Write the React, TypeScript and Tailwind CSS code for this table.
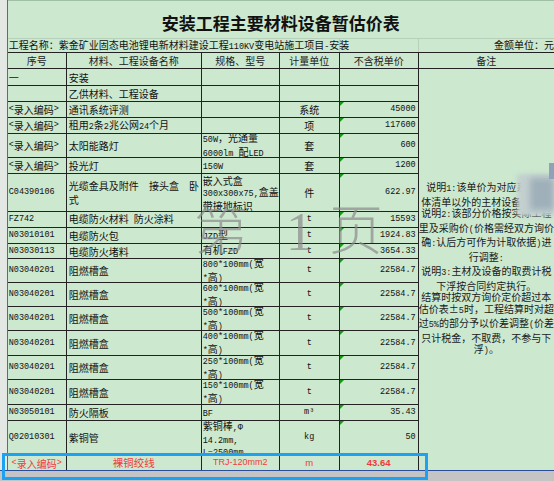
import React from "react";

type Row = {
  code: string;
  name: string[];
  spec: string[];
  unit: string;
  price: string;
  h: string;
};

const rows: Row[] = [
  { code: "一", name: ["安装"], spec: [], unit: "", price: "", h: "h-[17px]" },
  { code: "", name: ["乙供材料、工程设备"], spec: [], unit: "", price: "", h: "h-[16px]" },
  { code: "<录入编码>", name: ["通讯系统评测"], spec: [], unit: "系统", price: "45000", h: "h-[16px]" },
  { code: "<录入编码>", name: ["租用2条2兆公网24个月"], spec: [], unit: "项", price: "117600", h: "h-[16px]" },
  { code: "<录入编码>", name: ["太阳能路灯"], spec: ["50W，光通量", "6000lm 配LED"], unit: "套", price: "600", h: "h-[24px]" },
  { code: "<录入编码>", name: ["投光灯"], spec: ["150W"], unit: "套", price: "1200", h: "h-[16px]" },
  {
    code: "C04390106",
    name: ["光缆金具及附件  接头盒  卧", "式"],
    spec: ["嵌入式盒", "300x300x75,盒盖", "带接地标识"],
    unit: "件",
    price: "622.97",
    h: "h-[38px]",
  },
  { code: "FZ742", name: ["电缆防火材料 防火涂料"], spec: [], unit: "t", price: "15593", h: "h-[16px]" },
  { code: "N03010101", name: ["电缆防火包"], spec: ["JZD型"], unit: "t", price: "1924.83", h: "h-[16px]" },
  { code: "N03030113", name: ["电缆防火堵料"], spec: ["有机FZD"], unit: "t", price: "3654.33", h: "h-[15px]" },
  { code: "N03040201", name: ["阻燃槽盒"], spec: ["800*100mm(宽", "*高)"], unit: "t", price: "22584.7", h: "h-[24px]" },
  { code: "N03040201", name: ["阻燃槽盒"], spec: ["600*100mm(宽", "*高)"], unit: "t", price: "22584.7", h: "h-[24px]" },
  { code: "N03040201", name: ["阻燃槽盒"], spec: ["500*100mm(宽", "*高)"], unit: "t", price: "22584.7", h: "h-[24px]" },
  { code: "N03040201", name: ["阻燃槽盒"], spec: ["400*100mm(宽", "*高)"], unit: "t", price: "22584.7", h: "h-[25px]" },
  { code: "N03040201", name: ["阻燃槽盒"], spec: ["250*100mm(宽", "*高)"], unit: "t", price: "22584.7", h: "h-[24px]" },
  { code: "N03040201", name: ["阻燃槽盒"], spec: ["150*100mm(宽", "*高)"], unit: "t", price: "22584.7", h: "h-[25px]" },
  { code: "N03050101", name: ["防火隔板"], spec: ["BF"], unit: "m³", price: "35.43", h: "h-[16px]" },
  { code: "Q02010301", name: ["紫铜管"], spec: ["紫铜棒,Φ", "14.2mm,", "L=2500mm"], unit: "kg", price: "50", h: "h-[33px]" },
];

const notes = [
  "说明1:该单价为对应系统具",
  "体清单以外的主材设备暂估价",
  "说明2:该部分价格按实际工程",
  "里及采购价(价格需经双方询价",
  "确:认后方可作为计取依据)进",
  "行调整:",
  "说明3:主材及设备的取费计税",
  "下浮按合同约定执行。",
  "结算时按双方询价定价超过本",
  "估价表±5时，工程结算时对超",
  "过5%的部分予以价差调整(价差",
  "只计税金，不取费，不参与下",
  "浮)。",
];

// half-width runs in the narrow mono face, like the sheet's SimSun
function Mix({ t }: { t: string }) {
  const parts = t.split(/([\x20-\x7E³Φ]+)/);
  return (
    <>
      {parts.map((p, i) =>
        /^[\x20-\x7E³Φ]+$/.test(p) ? (
          <span key={i} className="font-['Liberation_Mono',monospace] text-[8.5px] whitespace-pre">
            {p}
          </span>
        ) : (
          <span key={i} className="whitespace-pre">{p}</span>
        )
      )}
    </>
  );
}

export default function App() {
  return (
    <div className="relative w-[554px] h-[481px] overflow-hidden bg-[#cce8cf] text-[#111] font-['Noto_Sans_CJK_SC',sans-serif] text-[10px]">
      <div className="flex h-[470px]">
        {/* row header gutter */}
        <div className="w-[8px] bg-[#e4e8e4]" />
        <div className="w-px bg-[#3f6fb5]" />

        <div className="flex-1 flex flex-col">
          {/* title */}
          <div className="h-[38px] flex items-center justify-center pt-[6px] border-t border-[#9fc0a6]">
            <span className="text-[17px] font-bold leading-none">安装工程主要材料设备暂估价表</span>
          </div>

          {/* project line */}
          <div className="h-[15px] flex border-t border-b border-t-[#b7d0ba] border-b-[#222] leading-[12px]">
            <div className="w-[332px] border-r border-[#b7d0ba] whitespace-nowrap pl-[1px]">
              <Mix t="工程名称：紫金矿业固态电池锂电新材料建设工程110KV变电站施工项目-安装" />
            </div>
            <div className="w-[79px] border-r border-[#b7d0ba]" />
            <div className="flex-1 text-right whitespace-nowrap">金额单位：元</div>
          </div>

          {/* column headers */}
          <div className="h-[16px] flex border-b border-[#222] text-[#222] leading-[15px]">
            <div className="w-[59px] border-r border-[#222] text-center">序号</div>
            <div className="w-[135px] border-r border-[#222] text-center">材料、工程设备名称</div>
            <div className="w-[78px] border-r border-[#222] text-center">规格、型号</div>
            <div className="w-[60px] border-r border-[#222] text-center">计量单位</div>
            <div className="w-[79px] border-r border-[#222] text-center">不含税单价</div>
            <div className="flex-1 text-center">备注</div>
          </div>

          {/* body */}
          <div className="flex-1 flex">
            <div className="w-[411px] flex flex-col">
              {rows.map((r, i) => (
                <div key={i} className={`${r.h} flex border-b border-[#222]`}>
                  <div className="w-[59px] border-r border-[#222] flex items-center pl-[1px] whitespace-nowrap">
                    <Mix t={r.code} />
                  </div>
                  <div className="w-[135px] border-r border-[#222] flex flex-col justify-center pl-[2px] leading-[11px] overflow-hidden">
                    {r.name.map((n, j) => (
                      <div key={j} className="whitespace-nowrap">
                        <Mix t={n} />
                      </div>
                    ))}
                  </div>
                  <div
                    className={`w-[78px] border-r border-[#222] flex flex-col pl-[1px] overflow-hidden ${
                      r.spec.length > 2 && r.code.startsWith("Q")
                        ? "justify-start leading-[10.5px]"
                        : "justify-center leading-[11px]"
                    }`}
                  >
                    {r.spec.map((s, j) => (
                      <div key={j} className="whitespace-nowrap">
                        <Mix t={s} />
                      </div>
                    ))}
                  </div>
                  <div className="w-[60px] border-r border-[#222] flex items-center justify-center">
                    <Mix t={r.unit} />
                  </div>
                  <div className="relative w-[79px] border-r border-[#222] flex items-center justify-end pr-[2px]">
                    {r.price && (
                      <div className="absolute left-0 top-0 w-0 h-0 border-t-[4px] border-r-[4px] border-t-[#179a17] border-r-transparent" />
                    )}
                    <span className="font-['Liberation_Mono',monospace] text-[8.5px]">{r.price}</span>
                  </div>
                </div>
              ))}

              {/* entry row in red */}
              <div className="h-[16px] flex text-[#f23a3a] pt-[2px]">
                <div className="w-[59px] border-r border-[#222] flex items-center justify-center whitespace-nowrap">
                  <Mix t="<录入编码>" />
                </div>
                <div className="w-[135px] border-r border-[#222] flex items-center justify-center text-[10.5px]">裸铜绞线</div>
                <div className="w-[78px] border-r border-[#222] flex items-center justify-center font-['Liberation_Sans',sans-serif] text-[9px]">
                  TRJ-120mm2
                </div>
                <div className="w-[60px] border-r border-[#222] flex items-center justify-center font-['Liberation_Sans',sans-serif] text-[9.5px]">
                  m
                </div>
                <div className="w-[79px] border-r border-[#222] flex items-center justify-center font-['Liberation_Sans',sans-serif] text-[9.5px] font-bold">
                  43.64
                </div>
              </div>
            </div>

            {/* merged remarks cell */}
            <div className="flex-1 flex flex-col items-center justify-center leading-[11.5px] text-[#1a1a1a]">
              {notes.map((n, i) => (
                <div key={i} className="whitespace-nowrap text-center">
                  <Mix t={n} />
                </div>
              ))}
            </div>
          </div>
        </div>
      </div>
      <div className="h-px bg-[#2b4c9b]" />
      <div className="h-[10px] bg-[#c4c4c4]" />

      {/* page watermark */}
      <div className="absolute left-[194px] top-[205px] flex items-start text-[54px] leading-none text-[#8a8a8a]/70 font-light font-['Liberation_Serif','Noto_Sans_CJK_SC',serif] pointer-events-none">
        <span>第</span>
        <span className="ml-[38px]">1</span>
        <span className="ml-[16px]">页</span>
      </div>

      {/* pixelated redaction */}
      <div className="absolute left-[517px] top-[174px] w-[37px] h-[42px] bg-[#c3d0cf] blur-[2px]" />
      <div className="absolute left-[530px] top-[178px] w-[24px] h-[32px] bg-[#9fb0ba] blur-[3px]" />
      <div className="absolute left-[549px] top-[163px] w-[5px] h-[16px] bg-[#8ea3b7]" />

      {/* selection highlight */}
      <div className="absolute left-[2px] top-[453px] w-[426px] h-[27px] border-[3px] border-[#1da1f0]" />
    </div>
  );
}
